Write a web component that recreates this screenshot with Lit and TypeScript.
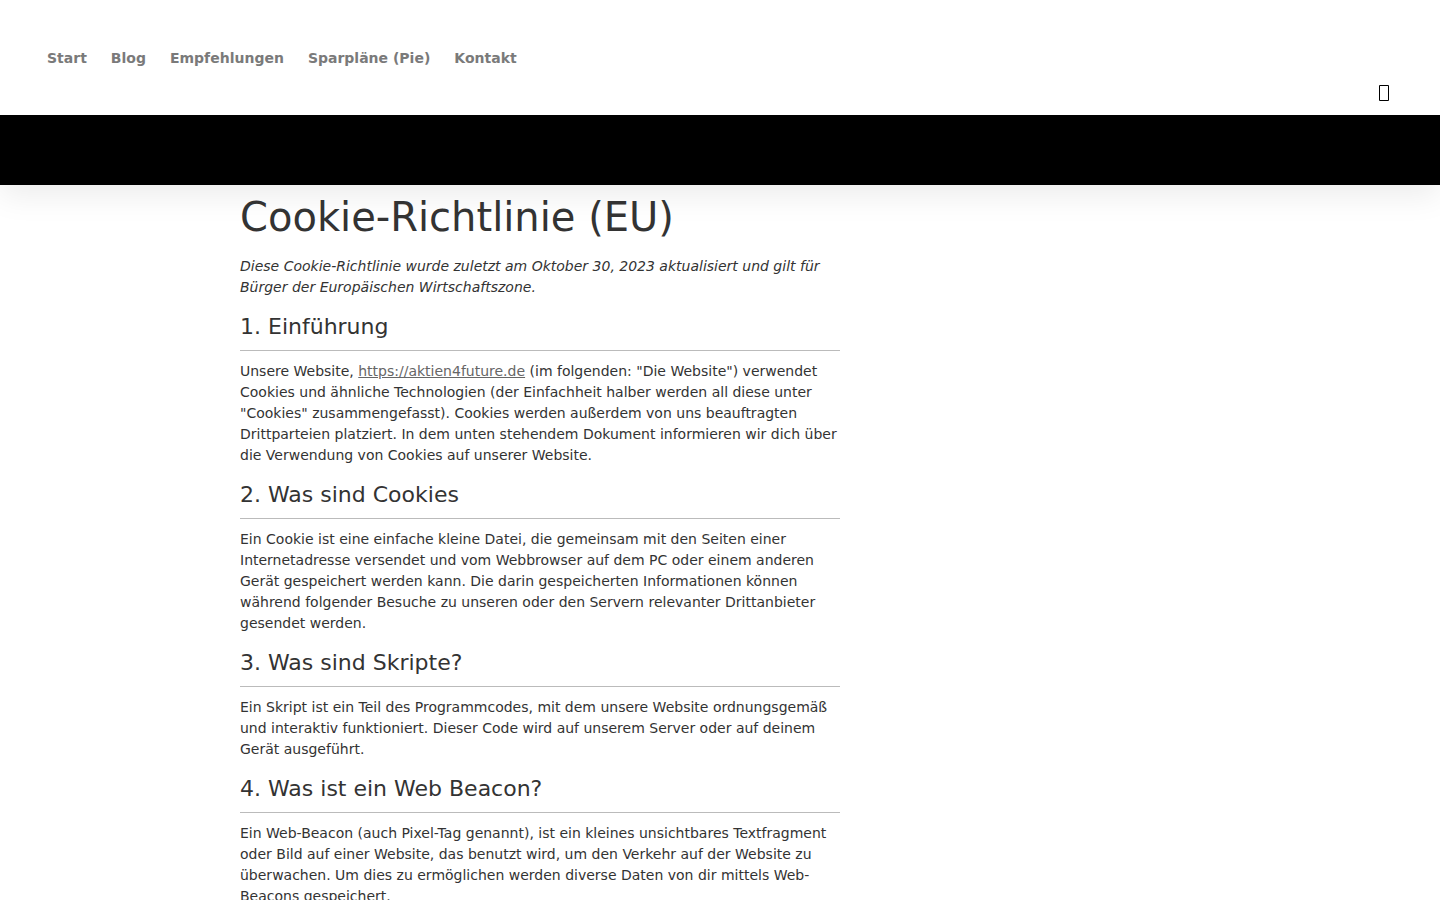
import { LitElement, html, css } from "lit";
import { customElement } from "lit/decorators.js";

const NAV = ["Start", "Blog", "Empfehlungen", "Sparpläne (Pie)", "Kontakt"];

const SECTIONS = [
  {
    title: "1. Einführung",
    body: html`Unsere Website, <a href="#website">https://aktien4future.de</a> (im folgenden: "Die Website") verwendet Cookies und ähnliche Technologien (der Einfachheit halber werden all diese unter "Cookies" zusammengefasst). Cookies werden außerdem von uns beauftragten Drittparteien platziert. In dem unten stehendem Dokument informieren wir dich über die Verwendung von Cookies auf unserer Website.`,
  },
  {
    title: "2. Was sind Cookies",
    body: "Ein Cookie ist eine einfache kleine Datei, die gemeinsam mit den Seiten einer Internetadresse versendet und vom Webbrowser auf dem PC oder einem anderen Gerät gespeichert werden kann. Die darin gespeicherten Informationen können während folgender Besuche zu unseren oder den Servern relevanter Drittanbieter gesendet werden.",
  },
  {
    title: "3. Was sind Skripte?",
    body: "Ein Skript ist ein Teil des Programmcodes, mit dem unsere Website ordnungsgemäß und interaktiv funktioniert. Dieser Code wird auf unserem Server oder auf deinem Gerät ausgeführt.",
  },
  {
    title: "4. Was ist ein Web Beacon?",
    body: "Ein Web-Beacon (auch Pixel-Tag genannt), ist ein kleines unsichtbares Textfragment oder Bild auf einer Website, das benutzt wird, um den Verkehr auf der Website zu überwachen. Um dies zu ermöglichen werden diverse Daten von dir mittels Web-Beacons gespeichert.",
  },
];

@customElement("app-root")
export class AppRoot extends LitElement {
  static styles = css`
    :host {
      display: block;
      height: 100vh;
      overflow: hidden;
      background: #fff;
      color: #333;
      font: 14px/21px "DejaVu Sans", sans-serif;
    }
    .header {
      box-shadow: 0 10px 30px rgba(0, 0, 0, 0.08);
    }
    .bar {
      display: flex;
      flex-direction: column;
      padding: 48px 47px 12px;
    }
    .nav {
      display: flex;
      gap: 24px;
    }
    .nav a {
      color: #7a7a7a;
      font-weight: 700;
      text-decoration: none;
    }
    .search {
      align-self: flex-end;
      display: flex;
      margin: 14px 0 0;
      padding: 2px 3px;
      border: 0;
      background: none;
      color: #000;
    }
    .icon {
      display: block;
      width: 12px;
      height: 16px;
    }
    .band {
      height: 70px;
      background: #000;
    }
    .page {
      max-width: 960px;
      margin: 0 auto;
      padding: 8px 0;
    }
    .doc {
      max-width: 600px;
    }
    h1 {
      margin: 0 0 15px;
      font-size: 40px;
      line-height: 48px;
      font-weight: 400;
    }
    p {
      margin: 0;
    }
    .intro {
      font-style: italic;
    }
    h2 {
      margin: 13px 0 10px;
      padding-bottom: 8px;
      border-bottom: 1px solid #bbb;
      font-size: 22px;
      line-height: 31px;
      font-weight: 400;
    }
    .doc a {
      color: #666;
    }
  `;

  render() {
    return html`
      <header class="header">
        <div class="bar">
          <nav class="nav">
            ${NAV.map((label) => html`<a href="#${label}">${label}</a>`)}
          </nav>
          <button class="search" aria-label="Suche">
            <svg class="icon" viewBox="0 0 12 16" fill="none" stroke="currentColor" aria-hidden="true">
              <path d="M1.5 .5h9v15h-9z" />
            </svg>
          </button>
        </div>
        <div class="band"></div>
      </header>
      <main class="page">
        <article class="doc">
          <h1>Cookie-Richtlinie (EU)</h1>
          <p class="intro">Diese Cookie-Richtlinie wurde zuletzt am Oktober 30, 2023 aktualisiert und gilt für Bürger der Europäischen Wirtschaftszone.</p>
          ${SECTIONS.map((s) => html`<section><h2>${s.title}</h2><p>${s.body}</p></section>`)}
        </article>
      </main>
    `;
  }
}
